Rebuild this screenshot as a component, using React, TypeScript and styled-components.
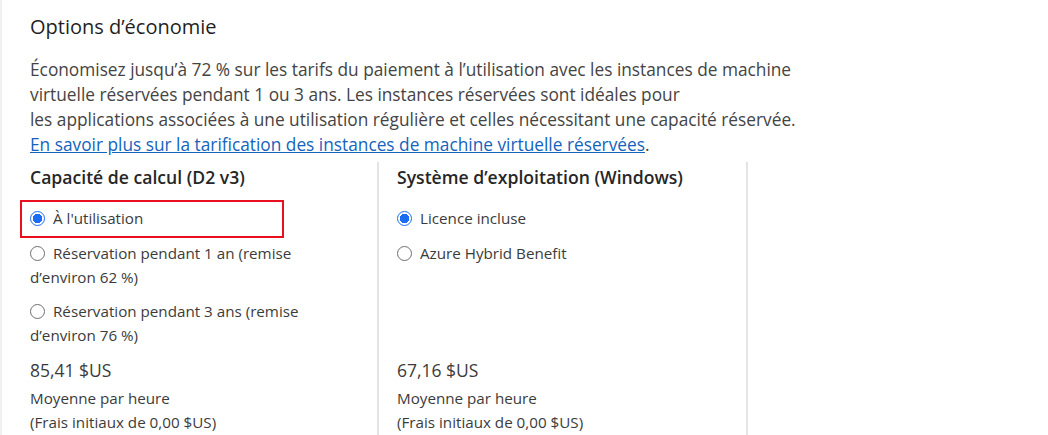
import React from "react";
import styled, { createGlobalStyle } from "styled-components";

const Global = createGlobalStyle`
  html, body { margin: 0; padding: 0; background: #ffffff; }
  body { font-family: "Open Sans", "Noto Sans", sans-serif; }
`;

const Page = styled.div`
  border-left: 2px solid #f1f1f1;
  padding: 13px 0 0 28px;
  height: 435px;
  box-sizing: border-box;
  overflow: hidden;
  color: #3b3b3b;
`;

const Title = styled.h2`
  margin: 0;
  font-size: 20px;
  line-height: 28px;
  font-weight: 400;
  color: #1f1f1f;
`;

const Intro = styled.p`
  margin: 16px 0 0;
  font-size: 17.3px;
  line-height: 25px;
  color: #444444;
`;

const Link = styled.a`
  color: #1463bd;
  text-decoration: underline;
`;

const Columns = styled.div`
  display: grid;
  grid-template-columns: 347px 369px 1fr;
  margin-top: 5px;
  height: 280px;
`;

const Column = styled.section<{ $divided?: boolean }>`
  display: flex;
  flex-direction: column;
  padding: 3px 20px 0 ${(p) => (p.$divided ? "18px" : "0")};
  border-left: ${(p) => (p.$divided ? "2px solid #e4e4e4" : "none")};
`;

const ColHeader = styled.h3`
  margin: 0;
  font-size: 17.6px;
  line-height: 24px;
  font-weight: 600;
  color: #262626;
`;

const Options = styled.div`
  display: flex;
  flex-direction: column;
  gap: 10.5px;
  margin-top: 17px;
  height: 141px;
`;

const OptionRow = styled.label`
  position: relative;
  display: block;
  font-size: 15.2px;
  line-height: 24px;
  color: #3b3b3b;
  max-width: 300px;
`;

const Radio = styled.span<{ $checked?: boolean }>`
  display: inline-block;
  box-sizing: border-box;
  width: 15px;
  height: 15px;
  border-radius: 50%;
  vertical-align: -2px;
  margin: 0 8px 0 0;
  border: 1px solid ${(p) => (p.$checked ? "#1b6ef3" : "#6f6f6f")};
  background: ${(p) =>
    p.$checked
      ? "radial-gradient(circle, #1b6ef3 0 4.5px, #ffffff 5px)"
      : "#ffffff"};
`;

const Highlight = styled.span`
  position: absolute;
  left: -10px;
  top: -6px;
  width: 264px;
  height: 38px;
  box-sizing: border-box;
  border: 2px solid #e8101e;
  pointer-events: none;
`;

const Price = styled.div`
  font-size: 17.5px;
  line-height: 24px;
  color: #3b3b3b;
  margin-top: 11px;
`;

const Note = styled.div<{ $first?: boolean }>`
  font-size: 15.2px;
  line-height: 24px;
  color: #3b3b3b;
  margin-top: ${(p) => (p.$first ? "4px" : "0")};
`;

type Opt = { label: string; checked?: boolean; highlight?: boolean };

const OptionGroup = ({ options }: { options: Opt[] }) => (
  <Options>
    {options.map((o) => (
      <OptionRow key={o.label}>
        <Radio $checked={o.checked} />
        {o.label}
        {o.highlight && <Highlight />}
      </OptionRow>
    ))}
  </Options>
);

const PriceBlock = ({ price }: { price: string }) => (
  <div>
    <Price>{price}</Price>
    <Note $first>Moyenne par heure</Note>
    <Note>(Frais initiaux de 0,00 $US)</Note>
  </div>
);

export default function App() {
  return (
    <>
      <Global />
      <Page>
        <Title>Options d’économie</Title>
        <Intro>
          Économisez jusqu’à 72 % sur les tarifs du paiement à l’utilisation avec les instances de machine
          <br />
          virtuelle réservées pendant 1 ou 3 ans. Les instances réservées sont idéales pour
          <br />
          les applications associées à une utilisation régulière et celles nécessitant une capacité réservée.
          <br />
          <Link href="#">En savoir plus sur la tarification des instances de machine virtuelle réservées</Link>.
        </Intro>
        <Columns>
          <Column>
            <ColHeader>Capacité de calcul (D2 v3)</ColHeader>
            <OptionGroup
              options={[
                { label: "À l'utilisation", checked: true, highlight: true },
                { label: "Réservation pendant 1 an (remise d’environ 62\u00a0%)" },
                { label: "Réservation pendant 3 ans (remise d’environ 76\u00a0%)" },
              ]}
            />
            <PriceBlock price="85,41 $US" />
          </Column>
          <Column $divided>
            <ColHeader>Système d’exploitation (Windows)</ColHeader>
            <OptionGroup
              options={[
                { label: "Licence incluse", checked: true },
                { label: "Azure Hybrid Benefit" },
              ]}
            />
            <PriceBlock price="67,16 $US" />
          </Column>
          <Column $divided />
        </Columns>
      </Page>
    </>
  );
}
